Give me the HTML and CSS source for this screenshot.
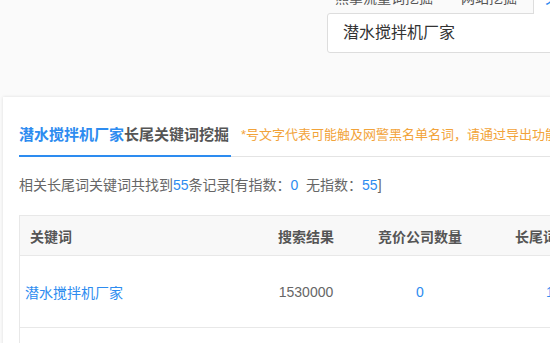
FILE: index.html
```html
<!DOCTYPE html>
<html>
<head>
    <meta charset="utf-8">
    <title>长尾关键词挖掘</title>
    <link rel="stylesheet" href="styles.css">
</head>
<body>
    <div class="top">
        <div class="search">
            <div class="tabs">
                <span class="tab">熊掌流量词挖掘</span>
                <span class="tab">网站挖掘</span>
                <span class="tab active">关键词挖掘</span>
            </div>
            <div class="input">潜水搅拌机厂家</div>
        </div>
    </div>

    <div class="card">
        <div class="card-head">
            <div class="card-title"><span class="blue">潜水搅拌机厂家</span>长尾关键词挖掘</div>
            <div class="note">*号文字代表可能触及网警黑名单名词，请通过导出功能查看完整数据</div>
        </div>

        <p class="summary">相关长尾词关键词共找到<span class="blue">55</span>条记录[有指数：<span class="blue">0</span>&nbsp; 无指数：<span class="blue">55</span>]</p>

        <div class="grid">
            <div class="row head">
                <div class="cell c1">关键词</div>
                <div class="cell c2">搜索结果</div>
                <div class="cell c3">竞价公司数量</div>
                <div class="cell c4">长尾词数量</div>
            </div>
            <div class="row">
                <div class="cell c1"><a href="#">潜水搅拌机厂家</a></div>
                <div class="cell c2">1530000</div>
                <div class="cell c3 blue">0</div>
                <div class="cell c4 blue">1</div>
            </div>
            <div class="row">
                <div class="cell c1"></div>
                <div class="cell c2"></div>
                <div class="cell c3"></div>
                <div class="cell c4"></div>
            </div>
        </div>
    </div>
</body>
</html>
```

FILE: styles.css
```css
body {
    margin: 0;
    background: #fafafa;
    font-family: "Liberation Sans", "Noto Sans CJK SC", sans-serif;
    color: #666;
    overflow: hidden;
    width: 550px;
    height: 343px;
}
.blue {
    color: #2d8cf0;
}

/* search box on top */
.top {
    display: flow-root;
    height: 97px;
}
.search {
    margin-left: 321px;
    margin-top: -17px;
    width: 400px;
}
.tabs {
    display: flex;
    height: 30px;
}
.tab {
    padding: 0 14px;
    font-size: 14px;
    line-height: 30px;
    color: #555;
    white-space: nowrap;
}
.tab.active {
    margin-left: 2px;
    padding: 0 11px;
    border-left: 1px solid #ddd;
    background: #fff;
    color: #2d8cf0;
    height: 31px;
    position: relative;
    z-index: 1;
}
.input {
    margin-left: 6px;
    height: 40px;
    box-sizing: border-box;
    border: 1px solid #ddd;
    border-radius: 3px;
    background: #fff;
    padding-left: 15px;
    font-size: 16px;
    line-height: 38px;
    color: #333;
}

/* main card */
.card {
    margin-left: 3px;
    width: 700px;
    height: 300px;
    background: #fff;
    box-shadow: 0 0 3px rgba(0, 0, 0, 0.12);
    padding: 18px 16px 0;
    box-sizing: border-box;
}
.card-head {
    display: flex;
    align-items: flex-start;
    height: 41px;
    border-bottom: 1px solid #e4e4e4;
}
.card-title {
    height: 40px;
    line-height: 40px;
    padding-right: 2px;
    border-bottom: 2px solid #2d8cf0;
    font-size: 15px;
    font-weight: bold;
    color: #555;
    white-space: nowrap;
}
.note {
    margin-left: 10px;
    line-height: 40px;
    font-size: 13px;
    color: #f2a33a;
    white-space: nowrap;
}
.summary {
    margin: 18px 0 0;
    font-size: 14px;
    line-height: 20px;
    white-space: nowrap;
}

/* result list */
.grid {
    margin-top: 20px;
    border-top: 1px solid #e8e8e8;
    border-left: 1px solid #e8e8e8;
}
.row {
    display: flex;
    height: 71px;
    border-bottom: 1px solid #e8e8e8;
    align-items: center;
    font-size: 14px;
}
.row.head {
    height: 39px;
    background: #f8f8f8;
    font-weight: bold;
    color: #555;
}
.cell {
    white-space: nowrap;
}
.c1 {
    width: 229px;
    padding-left: 5px;
    box-sizing: border-box;
}
.head .c1 {
    padding-left: 10px;
}
.c1 a {
    color: #2d8cf0;
    text-decoration: none;
}
.c2, .c3 {
    width: 114px;
    text-align: center;
}
.c4 {
    width: 146px;
    text-align: center;
}
```
